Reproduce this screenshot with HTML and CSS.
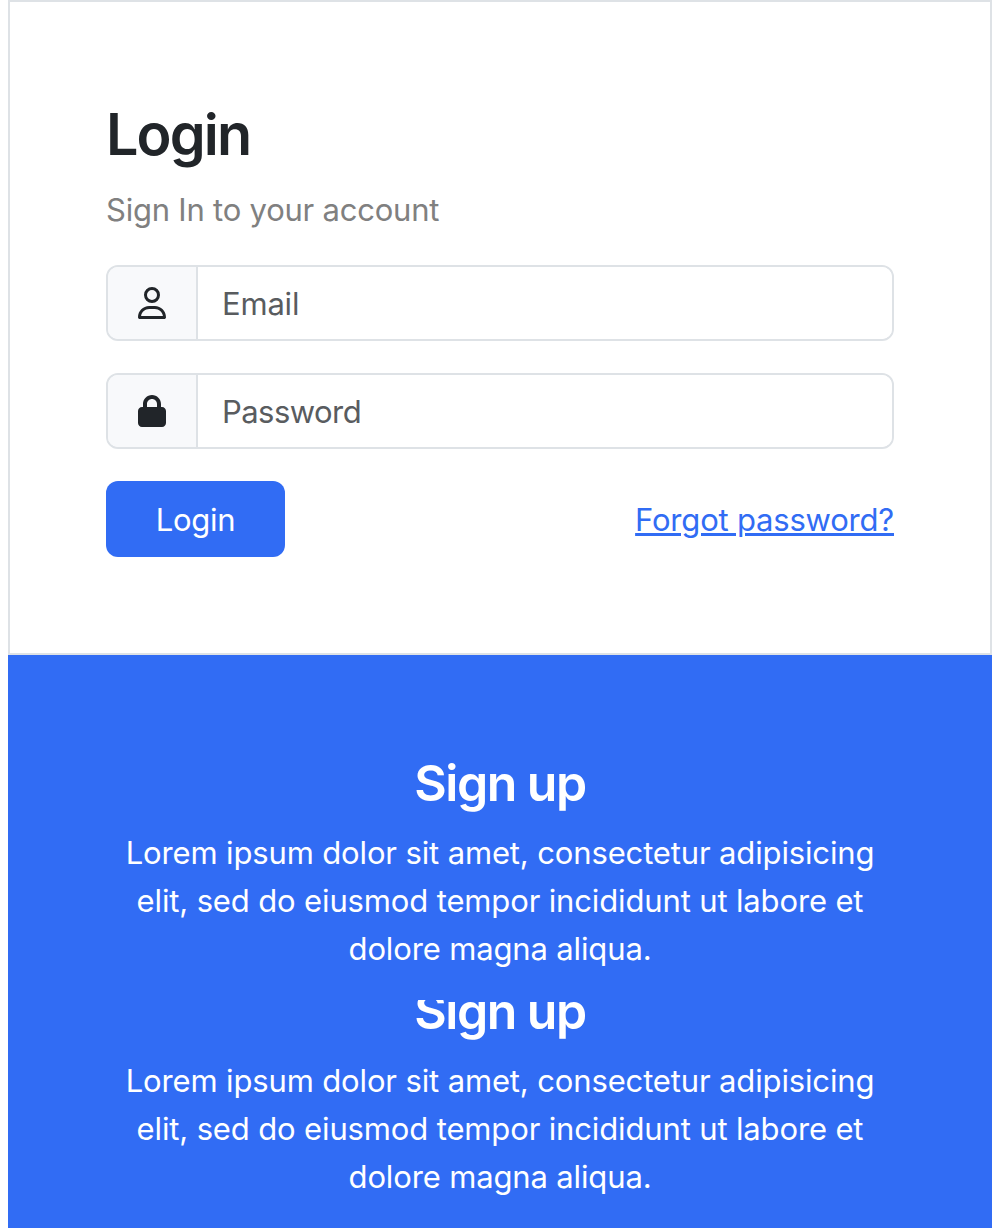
FILE: index.html
```html
<!DOCTYPE html>
<html lang="en">
<head>
<meta charset="utf-8">
<title>Login</title>
<link rel="stylesheet" href="styles.css">
</head>
<body>
<main class="page">
  <form class="card">
    <h1 class="title">Login</h1>
    <p class="subtitle">Sign In to your account</p>
    <label class="field">
      <span class="addon"><svg class="icon" viewBox="0 0 448 512"><path d="M304 128a80 80 0 1 0-160 0 80 80 0 1 0 160 0zM96 128a128 128 0 1 1 256 0A128 128 0 1 1 96 128zM49.300 464H398.700c-8.900-63.300-63.300-112-129-112H178.300c-65.700 0-120.100 48.700-129 112zM0 482.300C0 383.800 79.800 304 178.300 304h91.400C368.200 304 448 383.800 448 482.300c0 16.400-13.300 29.700-29.700 29.700H29.700C13.300 512 0 498.700 0 482.300z"/></svg></span>
      <input class="input email" type="text" placeholder="Email">
    </label>
    <label class="field">
      <span class="addon"><svg class="icon" viewBox="0 0 448 512"><path d="M144 144v48H304V144c0-44.200-35.800-80-80-80s-80 35.800-80 80zM80 192V144C80 64.500 144.500 0 224 0s144 64.500 144 144v48h16c35.300 0 64 28.700 64 64V448c0 35.300-28.700 64-64 64H64c-35.300 0-64-28.700-64-64V256c0-35.300 28.700-64 64-64H80z"/></svg></span>
      <input class="input" type="password" placeholder="Password">
    </label>
    <div class="actions">
      <button class="button" type="button">Login</button>
      <a class="link" href="#">Forgot password?</a>
    </div>
  </form>
  <section class="signup">
    <h2 class="signup-title">Sign up</h2>
    <p class="signup-text">Lorem ipsum dolor sit amet, consectetur adipisicing<br>elit, sed do eiusmod tempor incididunt ut labore et<br>dolore magna aliqua.</p>
  </section>
  <section class="signup signup-clipped">
    <h2 class="signup-title">Sign up</h2>
    <p class="signup-text">Lorem ipsum dolor sit amet, consectetur adipisicing<br>elit, sed do eiusmod tempor incididunt ut labore et<br>dolore magna aliqua.</p>
  </section>
</main>
</body>
</html>
```
FILE: styles.css
```css
* { box-sizing: border-box; }
body {
  margin: 0;
  background: #fff;
  color: #212529;
  font: 430 31px/48px Inter, "Liberation Sans", sans-serif;
}
h1, h2, p { margin: 0; }
.page { height: 1228px; padding: 0 8px; overflow: hidden; }
.card { height: 655px; padding: 97px 96px 95px; border: 2px solid #dee2e6; }
.title {
  margin-bottom: 16px;
  font-size: 57.5px;
  font-weight: 560;
  line-height: 71px;
  letter-spacing: -1.9px;
}
.subtitle { margin-bottom: 31px; color: #808080; letter-spacing: -0.22px; }
.field {
  display: flex;
  height: 76px;
  margin-bottom: 32px;
  border: 2px solid #dee2e6;
  border-radius: 12px;
  overflow: hidden;
}
.addon {
  display: flex;
  flex: none;
  align-items: center;
  justify-content: center;
  width: 90px;
  border-right: 2px solid #dee2e6;
  background: #f8f9fb;
}
.icon { display: block; width: 28px; height: 32px; fill: #212529; }
.input {
  flex: 1;
  min-width: 0;
  padding: 2px 24px 0;
  border: 0;
  outline: 0;
  background: #fff;
  font: inherit;
  letter-spacing: -0.55px;
}
.email { letter-spacing: -0.2px; }
.input::placeholder { color: #595c5f; opacity: 1; }
.actions { display: flex; align-items: center; justify-content: space-between; }
.button {
  width: 179px;
  height: 76px;
  padding: 2px 0 0;
  border: 0;
  border-radius: 12px;
  background: #316cf4;
  color: #fff;
  font: inherit;
  letter-spacing: -0.3px;
}
.link {
  padding-top: 2px;
  color: #316cf4;
  letter-spacing: -0.2px;
  text-decoration-thickness: 3px;
  text-underline-offset: 2px;
}
.signup {
  height: 345px;
  padding-top: 97px;
  overflow: hidden;
  background: #316cf4;
  color: #fff;
  text-align: center;
}
.signup-clipped { height: 228px; padding-top: 0; }
.signup-clipped .signup-title { margin-top: -20px; }
.signup-title {
  margin-bottom: 15px;
  font-size: 50px;
  font-weight: 570;
  line-height: 62px;
  letter-spacing: -1.5px;
}
.signup-text { letter-spacing: -0.14px; }
```
